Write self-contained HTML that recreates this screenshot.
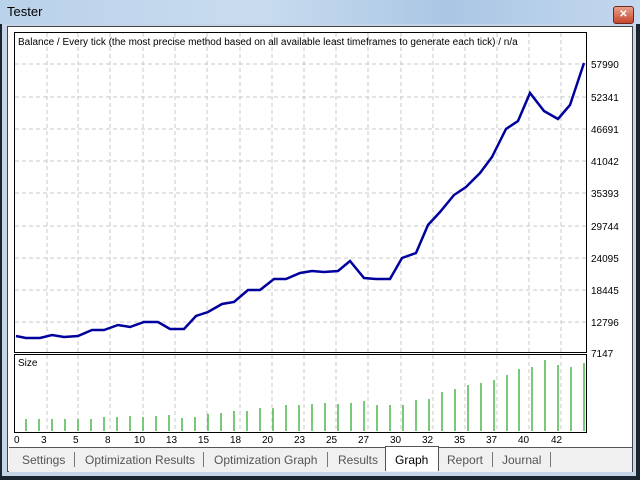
<!DOCTYPE html><html><head><style>
body{margin:0;width:640px;height:480px;overflow:hidden;background:#1a2530;font-family:"Liberation Sans",sans-serif;}
#title{position:absolute;left:0;top:0;width:640px;height:24px;background:linear-gradient(90deg,#b9d1ea,#c9dcef 40%,#aac6e4 70%,#c4d8ee);}
#title span{position:absolute;left:7px;top:4px;font-size:13px;color:#000}
#close{position:absolute;left:613px;top:6px;width:19px;height:16px;background:linear-gradient(#e8a08a,#c8452c);border:1px solid #6a2a20;border-radius:3px;color:#fff;font-size:10px;text-align:center;line-height:16px;font-weight:bold}
#frame{position:absolute;left:2px;top:24px;width:634px;height:452px;background:#c6d6e8;}
#inner{position:absolute;left:7px;top:26px;width:626px;height:446px;background:#fff;border:1px solid #444;box-sizing:border-box}
#tabs{position:absolute;left:9px;top:447px;width:623px;height:24px;background:#f0f0f0;border-top:1px solid #555}
.t{position:absolute;top:5px;font-size:12px;color:#555}
.s{position:absolute;top:4px;width:1px;height:15px;background:#777}
</style></head><body>
<div id="title"><span>Tester</span><div id="close">✕</div></div>
<div id="frame"></div>
<div id="inner"></div>
<svg style="position:absolute;left:0;top:0" width="640" height="480" font-family="Liberation Sans" font-size="10">
<rect x="14.5" y="32.5" width="572" height="320" fill="#fff" stroke="#000"/>
<rect x="14.5" y="354.5" width="572" height="78" fill="#fff" stroke="#000"/>
<g stroke="#c8c8c8" stroke-dasharray="4,3">
<path d="M47 33V352M78 33V352M110 33V352M143 33V352M175 33V352M207 33V352M240 33V352M272 33V352M304 33V352M336 33V352M368 33V352M401 33V352M433 33V352M465 33V352M497 33V352M529 33V352M561 33V352"/>
<path d="M47 355V432M78 355V432M110 355V432M143 355V432M175 355V432M207 355V432M240 355V432M272 355V432M304 355V432M336 355V432M368 355V432M401 355V432M433 355V432M465 355V432M497 355V432M529 355V432M561 355V432"/>
<path d="M15 64H586M15 97H586M15 129H586M15 161H586M15 193H586M15 226H586M15 258H586M15 290H586M15 322H586"/>
</g>
<text x="18" y="45" font-size="10">Balance / Every tick (the most precise method based on all available least timeframes to generate each tick) / n/a</text>
<text x="18" y="366" font-size="10">Size</text>
<polyline fill="none" stroke="#00009c" stroke-width="2.5" points="16,336 26,338 40,338 52,335 64,337 78,336 92,330 104,330 118,325 130,327 144,322 158,322 170,329 184,329 196,316 208,312 222,304 234,302 248,290 260,290 274,279 286,279 300,273 312,271 324,272 338,271 350,261 364,278 376,279 390,279 402,258 416,253 428,225 440,212 454,195 466,187 480,173 492,157 506,129 518,121 530,93 544,111 558,119 570,105 584,63"/>
<g stroke-width="1.5" stroke="#4cb84c">
<path d="M26 431V419M39 431V419M52 431V419M65 431V419M78 431V419M91 431V419M104 431V417M117 431V417M130 431V416M143 431V417M156 431V416M169 431V415M182 431V418M195 431V417M208 431V414M221 431V413M234 431V411M247 431V411M260 431V408M273 431V408M286 431V405M299 431V405M312 431V404M325 431V403M338 431V404M351 431V403M364 431V401M377 431V405M390 431V405M403 431V405M416 431V400M429 431V399M442 431V392M455 431V389M468 431V385M481 431V383M494 431V380M507 431V375M519 431V369M532 431V367M545 431V360M558 431V365M571 431V367M584 431V363"/>
</g>
<g font-size="10" fill="#000">
<text x="591" y="68">57990</text><text x="591" y="101">52341</text><text x="591" y="133">46691</text><text x="591" y="165">41042</text><text x="591" y="197">35393</text><text x="591" y="230">29744</text><text x="591" y="262">24095</text><text x="591" y="294">18445</text><text x="591" y="326">12796</text><text x="591" y="357">7147</text>
<text x="14" y="443">0</text><text x="41" y="443">3</text><text x="73" y="443">5</text><text x="105" y="443">8</text><text x="134" y="443">10</text><text x="166" y="443">13</text><text x="198" y="443">15</text><text x="230" y="443">18</text><text x="262" y="443">20</text><text x="294" y="443">23</text><text x="326" y="443">25</text><text x="358" y="443">27</text><text x="390" y="443">30</text><text x="422" y="443">32</text><text x="454" y="443">35</text><text x="486" y="443">37</text><text x="518" y="443">40</text><text x="551" y="443">42</text>
</g>
</svg>
<div id="tabs">
<span class="t" style="left:13px">Settings</span><div class="s" style="left:65px"></div>
<span class="t" style="left:76px">Optimization Results</span><div class="s" style="left:194px"></div>
<span class="t" style="left:205px">Optimization Graph</span><div class="s" style="left:318px"></div>
<span class="t" style="left:329px">Results</span>
<div style="position:absolute;left:376px;top:-2px;width:52px;height:24px;background:#fff;border:1px solid #555;border-bottom:none"></div>
<span class="t" style="left:386px;color:#000">Graph</span>
<span class="t" style="left:438px">Report</span><div class="s" style="left:483px"></div>
<span class="t" style="left:493px">Journal</span><div class="s" style="left:541px"></div>
</div>
</body></html>
